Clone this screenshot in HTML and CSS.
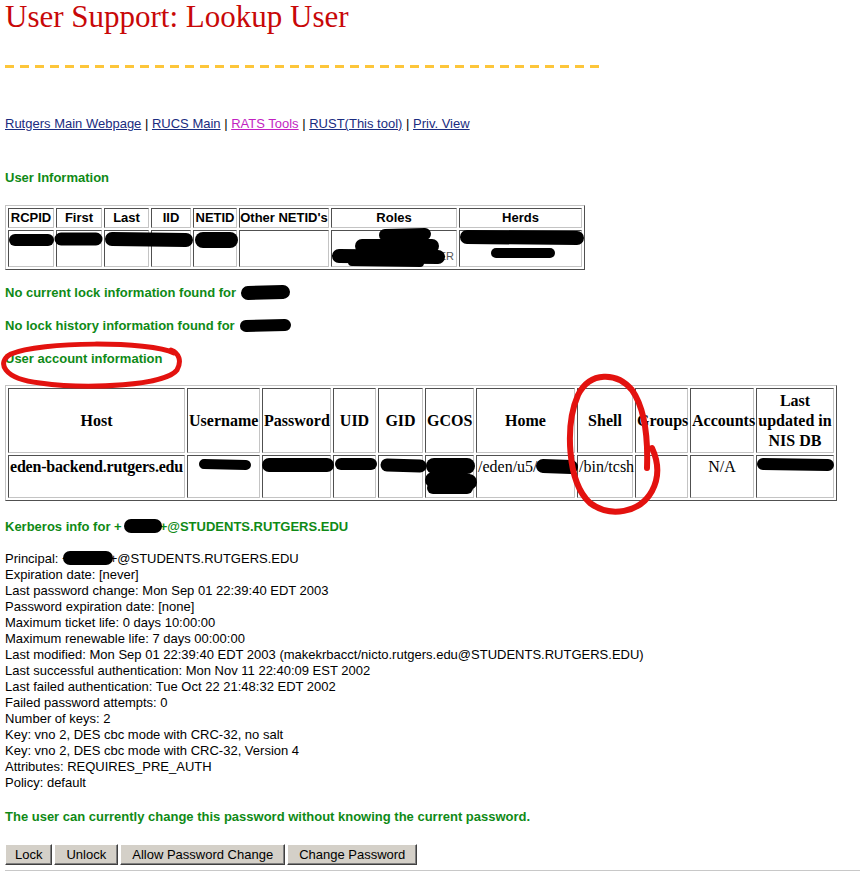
FILE: index.html
```html
<!DOCTYPE html>
<html>
<head>
<meta charset="utf-8">
<title>User Support: Lookup User</title>
<link rel="stylesheet" href="styles.css">
</head>
<body>
<div class="page">
  <h1 class="title">User Support: Lookup User</h1>
  <div class="dashes"></div>
  <p class="links"><a href="#">Rutgers Main Webpage</a> | <a href="#">RUCS Main</a> | <a href="#" class="visited">RATS Tools</a> | <a href="#">RUST(This tool)</a> | <a href="#">Priv. View</a></p>

  <p class="head h-userinfo">User Information</p>
  <table class="grid t1">
    <tr>
      <th class="c-rcpid">RCPID</th>
      <th class="c-first">First</th>
      <th class="c-last">Last</th>
      <th class="c-iid">IID</th>
      <th class="c-netid">NETID</th>
      <th class="c-other">Other NETID's</th>
      <th class="c-roles">Roles</th>
      <th class="c-herds">Herds</th>
    </tr>
    <tr>
      <td></td><td></td><td></td><td></td><td></td><td></td>
      <td class="roles-cell"><span class="roles-tail">ER</span></td>
      <td></td>
    </tr>
  </table>

  <p class="head h-lock1">No current lock information found for</p>
  <p class="head h-lock2">No lock history information found for</p>
  <p class="head h-lock2">User account information</p>

  <table class="grid t2">
    <tr>
      <th class="k-host">Host</th>
      <th class="k-user">Username</th>
      <th class="k-pass">Password</th>
      <th class="k-uid">UID</th>
      <th class="k-gid">GID</th>
      <th class="k-gcos">GCOS</th>
      <th class="k-home">Home</th>
      <th class="k-shell">Shell</th>
      <th class="k-groups">Groups</th>
      <th class="k-acc">Accounts</th>
      <th class="k-last">Last updated in NIS DB</th>
    </tr>
    <tr>
      <td class="hostname">eden-backend.rutgers.edu</td>
      <td></td>
      <td></td>
      <td></td>
      <td></td>
      <td></td>
      <td>/eden/u5/</td>
      <td>/bin/tcsh</td>
      <td></td>
      <td class="center">N/A</td>
      <td></td>
    </tr>
  </table>

  <p class="head h-kerb">Kerberos info for +<span class="gap gap-kerb"></span>+@STUDENTS.RUTGERS.EDU</p>

  <div class="kinfo">
    <div>Principal: +<span class="gap gap-princ"></span>+@STUDENTS.RUTGERS.EDU</div>
    <div>Expiration date: [never]</div>
    <div>Last password change: Mon Sep 01 22:39:40 EDT 2003</div>
    <div>Password expiration date: [none]</div>
    <div>Maximum ticket life: 0 days 10:00:00</div>
    <div>Maximum renewable life: 7 days 00:00:00</div>
    <div>Last modified: Mon Sep 01 22:39:40 EDT 2003 (makekrbacct/nicto.rutgers.edu@STUDENTS.RUTGERS.EDU)</div>
    <div>Last successful authentication: Mon Nov 11 22:40:09 EST 2002</div>
    <div>Last failed authentication: Tue Oct 22 21:48:32 EDT 2002</div>
    <div>Failed password attempts: 0</div>
    <div>Number of keys: 2</div>
    <div>Key: vno 2, DES cbc mode with CRC-32, no salt</div>
    <div>Key: vno 2, DES cbc mode with CRC-32, Version 4</div>
    <div>Attributes: REQUIRES_PRE_AUTH</div>
    <div>Policy: default</div>
  </div>

  <p class="head h-can">The user can currently change this password without knowing the current password.</p>

  <div class="buttons">
    <button class="btn btn-narrow">Lock</button>
    <button class="btn">Unlock</button>
    <button class="btn">Allow Password Change</button>
    <button class="btn">Change Password</button>
  </div>
  <div class="rule"></div>

  <svg class="marks" width="860" height="872" viewBox="0 0 860 872">
    <g class="redact">
      <path d="M15 240 L48 240" stroke-width="12"/>
      <path d="M61 239 L96 239" stroke-width="13"/>
      <path d="M112 239 L186 240" stroke-width="14"/>
      <path d="M203 240 L230 240" stroke-width="16"/>
      <path d="M385 235 L425 234" stroke-width="12"/>
      <path d="M362 246 L432 246" stroke-width="14"/>
      <path d="M339 256 L438 257" stroke-width="14"/>
      <path d="M352 262 L420 263" stroke-width="8"/>
      <path d="M467 237 L577 238" stroke-width="14"/>
      <path d="M496 253 L550 253" stroke-width="10"/>
      <path d="M248 293 L283 292" stroke-width="14"/>
      <path d="M246 326 L285 325" stroke-width="12"/>
      <path d="M204 464 L246 465" stroke-width="10"/>
      <path d="M269 465 L327 465" stroke-width="14"/>
      <path d="M341 464 L371 464" stroke-width="12"/>
      <path d="M387 465 L420 466" stroke-width="13"/>
      <path d="M434 466 L467 466" stroke-width="16"/>
      <path d="M433 480 L469 482" stroke-width="16"/>
      <path d="M433 488 L467 488" stroke-width="12"/>
      <path d="M543 466 L571 467" stroke-width="14"/>
      <path d="M763 464 L828 465" stroke-width="12"/>
      <path d="M131 526 L155 526" stroke-width="14"/>
      <path d="M70 558 L106 558" stroke-width="14"/>
    </g>
    <g class="circle">
      <path d="M174 353 C150 341 40 341 11 354 C-4 362 3 379 40 383 C90 390 166 385 177 370 C182 361 179 353 171 350" stroke-width="5"/>
      <path d="M647 468 C648 440 646 410 632 390 C617 372 590 371 578 395 C565 425 567 482 590 503 C610 518 640 513 652 491 C660 476 658 461 652 448" stroke-width="6"/>
    </g>
  </svg>
</div>
</body>
</html>
```

FILE: styles.css
```css
html, body {
  margin: 0;
  padding: 0;
  background: #fff;
}

body {
  font-family: "Liberation Sans", Arial, sans-serif;
  font-size: 13px;
  line-height: 16px;
  color: #000;
}

.page {
  position: relative;
  width: 860px;
  height: 872px;
  padding-left: 5px;
  box-sizing: border-box;
  overflow: hidden;
}

.title {
  margin: 0;
  font-family: "Liberation Serif", "Times New Roman", serif;
  font-weight: normal;
  font-size: 31px;
  line-height: 34px;
  color: #c80808;
}

.dashes {
  margin-top: 31px;
  width: 600px;
  height: 3px;
  background: repeating-linear-gradient(90deg, #fdc63a 0 9px, transparent 9px 15px);
}

.links {
  margin: 48px 0 0;
}

.links a {
  color: #1a2c80;
  text-decoration: underline;
}

.links a.visited {
  color: #c21fc2;
}

.head {
  margin: 0;
  color: #0f8a16;
  font-weight: bold;
}

.h-userinfo { margin-top: 38px; }
.h-lock1 { margin-top: 15px; }
.h-lock2 { margin-top: 17px; }
.h-kerb { margin-top: 18px; }
.h-can { margin-top: 18px; }

.gap {
  display: inline-block;
  height: 1px;
}
.gap-kerb { width: 38px; }
.gap-princ { width: 40px; }

/* tables */
.grid {
  border-collapse: separate;
  border-spacing: 2px;
  border: 1px solid;
  border-color: #c4c4c4 #505050 #505050 #c4c4c4;
  table-layout: fixed;
}

.grid th,
.grid td {
  border: 1px solid;
  border-color: #505050 #c4c4c4 #c4c4c4 #505050;
  padding: 0;
  box-sizing: border-box;
}

.t1 {
  width: 580px;
  margin-top: 19px;
}

.t1 th {
  height: 20px;
  font-size: 13px;
  font-weight: bold;
  text-align: center;
  white-space: nowrap;
}

.t1 td {
  height: 37px;
  vertical-align: bottom;
}

.c-rcpid { width: 46px; }
.c-first { width: 46px; }
.c-last { width: 45px; }
.c-iid { width: 40px; }
.c-netid { width: 44px; }
.c-other { width: 90px; }
.c-roles { width: 126px; }
.c-herds { width: 123px; }

.roles-cell { text-align: right; }
.roles-tail {
  font-size: 11px;
  color: #555;
  padding-right: 2px;
  line-height: 20px;
}

.t2 {
  width: 832px;
  margin-top: 18px;
  font-family: "Liberation Serif", "Times New Roman", serif;
  font-size: 16px;
  line-height: 20px;
}

.t2 th {
  height: 65px;
  font-weight: bold;
  text-align: center;
  vertical-align: middle;
  padding: 0 1px;
}

.t2 td {
  height: 43px;
  vertical-align: top;
  padding: 1px;
  white-space: nowrap;
}

.t2 td.hostname {
  font-weight: bold;
  letter-spacing: -0.2px;
}
.t2 td.center { text-align: center; }

.k-host { width: 177px; }
.k-user { width: 73px; }
.k-pass { width: 69px; }
.k-uid { width: 43px; }
.k-gid { width: 45px; }
.k-gcos { width: 49px; }
.k-home { width: 99px; }
.k-shell { width: 56px; }
.k-groups { width: 53px; }
.k-acc { width: 64px; }
.k-last { width: 78px; }

.kinfo {
  margin-top: 16px;
}

.buttons {
  display: flex;
  gap: 2px;
  margin-top: 19px;
}

.btn {
  height: 21px;
  padding: 0 11px;
  margin: 0;
  font-family: "Liberation Sans", Arial, sans-serif;
  font-size: 13px;
  color: #000;
  background: #d4d0c8;
  border: 1px solid;
  border-color: #fff #404040 #404040 #fff;
  box-shadow: inset -1px -1px 0 #808080;
  border-radius: 0;
}

.btn-narrow { padding: 0 9px; }

.rule {
  margin-top: 5px;
  width: 855px;
  height: 1px;
  background: #c8c8c8;
}

.marks {
  position: absolute;
  left: 0;
  top: 0;
  pointer-events: none;
}

.marks path {
  fill: none;
  stroke-linecap: round;
  stroke-linejoin: round;
}

.redact path { stroke: #000; }
.circle path { stroke: #e3120f; }
```
